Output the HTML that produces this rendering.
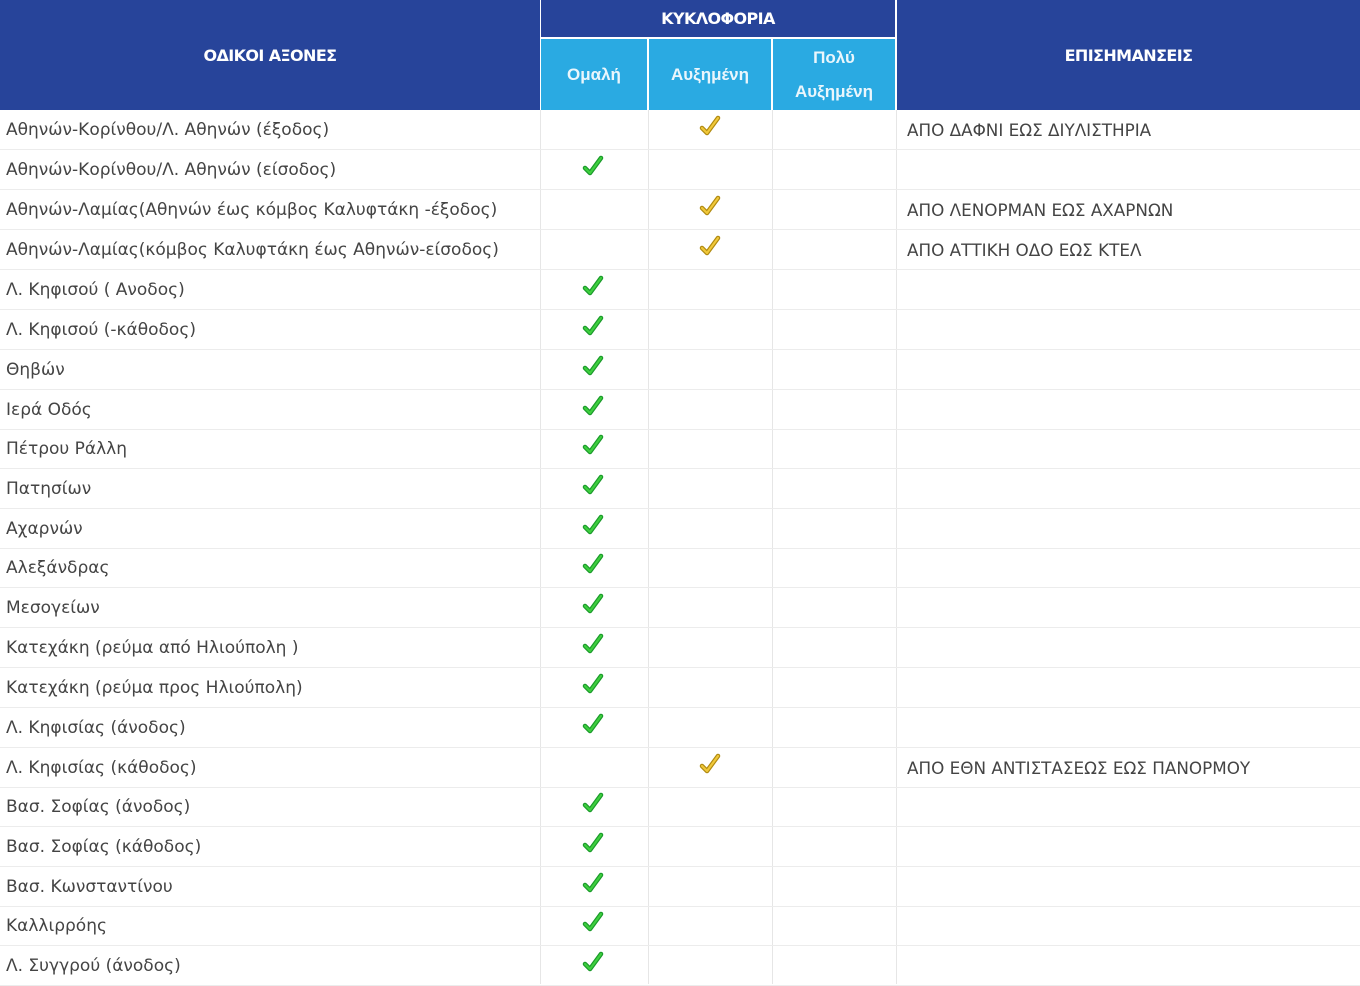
<!DOCTYPE html>
<html><head><meta charset="utf-8"><style>
*{margin:0;padding:0;box-sizing:border-box}
body{width:1360px;height:984px;overflow:hidden;background:#fff;font-family:"Liberation Sans","DejaVu Sans",sans-serif;position:relative}
.h{position:absolute;color:#fff;display:flex;align-items:center;justify-content:center;text-align:center}
.d{background:#27449a;font-weight:bold;font-size:16px;letter-spacing:-0.6px;font-family:"DejaVu Sans",sans-serif}
.l{background:#2aaae2;font-size:17px;font-weight:bold;line-height:34px;color:#eaf6fc}
.row{position:absolute;left:0;width:1360px;height:40px;border-bottom:1px solid #ececec}
.row span{position:absolute;top:0;line-height:40px;font-size:17px;color:#444;font-family:"DejaVu Sans",sans-serif}
.a{left:6px}.n{left:907px;font-size:16.8px!important}
.v{position:absolute;top:0;width:1px;height:874px;background:#e6e6e6}
.ck{position:absolute;top:8px;width:22px;height:22px}
</style></head><body>
<div class="h d" style="left:0;top:0;width:540px;height:110px">ΟΔΙΚΟΙ ΑΞΟΝΕΣ</div>
<div class="h d" style="left:541px;top:0;width:354px;height:37px">ΚΥΚΛΟΦΟΡΙΑ</div>
<div class="h d" style="left:897px;top:0;width:463px;height:110px">ΕΠΙΣΗΜΑΝΣΕΙΣ</div>
<div class="h l" style="left:541px;top:39px;width:106px;height:71px">Ομαλή</div>
<div class="h l" style="left:649px;top:39px;width:122px;height:71px">Αυξημένη</div>
<div class="h l" style="left:773px;top:39px;width:122px;height:71px">Πολύ<br>Αυξημένη</div>
<div style="position:absolute;left:0;top:110px;width:1360px;height:874px">
<div class="v" style="left:540px"></div><div class="v" style="left:648px"></div><div class="v" style="left:772px"></div><div class="v" style="left:896px"></div>
</div>
<svg width="0" height="0" style="position:absolute"><defs>
<symbol id="g" viewBox="0 0 22 22"><path d="M3 13 L8 18 L19 3" fill="none" stroke="#1a9a2a" stroke-width="4.5" stroke-linecap="round" stroke-linejoin="round"/><path d="M3 13 L8 18 L19 3" fill="none" stroke="#3ecf3e" stroke-width="2.2" stroke-linecap="round" stroke-linejoin="round"/></symbol>
<symbol id="y" viewBox="0 0 22 22"><path d="M3 13 L8 18 L19 3" fill="none" stroke="#b08a10" stroke-width="4.5" stroke-linecap="round" stroke-linejoin="round"/><path d="M3 13 L8 18 L19 3" fill="none" stroke="#f0c83a" stroke-width="2.2" stroke-linecap="round" stroke-linejoin="round"/></symbol>
</defs></svg>
<div class="row" style="top:110px"><span class="a">Αθηνών-Κορίνθου/Λ. Αθηνών (έξοδος)</span><svg class="ck" style="left:699px;top:5px"><use href="#y"/></svg><span class="n">ΑΠΟ ΔΑΦΝΙ ΕΩΣ ΔΙΥΛΙΣΤΗΡΙΑ</span></div>
<div class="row" style="top:150px"><span class="a">Αθηνών-Κορίνθου/Λ. Αθηνών (είσοδος)</span><svg class="ck" style="left:582px;top:5px"><use href="#g"/></svg></div>
<div class="row" style="top:190px"><span class="a">Αθηνών-Λαμίας(Αθηνών έως κόμβος Καλυφτάκη -έξοδος)</span><svg class="ck" style="left:699px;top:5px"><use href="#y"/></svg><span class="n">ΑΠΟ ΛΕΝΟΡΜΑΝ ΕΩΣ ΑΧΑΡΝΩΝ</span></div>
<div class="row" style="top:230px"><span class="a">Αθηνών-Λαμίας(κόμβος Καλυφτάκη έως Αθηνών-είσοδος)</span><svg class="ck" style="left:699px;top:5px"><use href="#y"/></svg><span class="n">ΑΠΟ ΑΤΤΙΚΗ ΟΔΟ ΕΩΣ ΚΤΕΛ</span></div>
<div class="row" style="top:270px"><span class="a">Λ. Κηφισού ( Ανοδος)</span><svg class="ck" style="left:582px;top:5px"><use href="#g"/></svg></div>
<div class="row" style="top:310px"><span class="a">Λ. Κηφισού (-κάθοδος)</span><svg class="ck" style="left:582px;top:5px"><use href="#g"/></svg></div>
<div class="row" style="top:350px"><span class="a">Θηβών</span><svg class="ck" style="left:582px;top:5px"><use href="#g"/></svg></div>
<div class="row" style="top:390px"><span class="a">Ιερά Οδός</span><svg class="ck" style="left:582px;top:5px"><use href="#g"/></svg></div>
<div class="row" style="top:429px"><span class="a">Πέτρου Ράλλη</span><svg class="ck" style="left:582px;top:5px"><use href="#g"/></svg></div>
<div class="row" style="top:469px"><span class="a">Πατησίων</span><svg class="ck" style="left:582px;top:5px"><use href="#g"/></svg></div>
<div class="row" style="top:509px"><span class="a">Αχαρνών</span><svg class="ck" style="left:582px;top:5px"><use href="#g"/></svg></div>
<div class="row" style="top:548px"><span class="a">Αλεξάνδρας</span><svg class="ck" style="left:582px;top:5px"><use href="#g"/></svg></div>
<div class="row" style="top:588px"><span class="a">Μεσογείων</span><svg class="ck" style="left:582px;top:5px"><use href="#g"/></svg></div>
<div class="row" style="top:628px"><span class="a">Κατεχάκη (ρεύμα από Ηλιούπολη )</span><svg class="ck" style="left:582px;top:5px"><use href="#g"/></svg></div>
<div class="row" style="top:668px"><span class="a">Κατεχάκη (ρεύμα προς Ηλιούπολη)</span><svg class="ck" style="left:582px;top:5px"><use href="#g"/></svg></div>
<div class="row" style="top:708px"><span class="a">Λ. Κηφισίας (άνοδος)</span><svg class="ck" style="left:582px;top:5px"><use href="#g"/></svg></div>
<div class="row" style="top:748px"><span class="a">Λ. Κηφισίας (κάθοδος)</span><svg class="ck" style="left:699px;top:5px"><use href="#y"/></svg><span class="n">ΑΠΟ ΕΘΝ ΑΝΤΙΣΤΑΣΕΩΣ ΕΩΣ ΠΑΝΟΡΜΟΥ</span></div>
<div class="row" style="top:787px"><span class="a">Βασ. Σοφίας (άνοδος)</span><svg class="ck" style="left:582px;top:5px"><use href="#g"/></svg></div>
<div class="row" style="top:827px"><span class="a">Βασ. Σοφίας (κάθοδος)</span><svg class="ck" style="left:582px;top:5px"><use href="#g"/></svg></div>
<div class="row" style="top:867px"><span class="a">Βασ. Κωνσταντίνου</span><svg class="ck" style="left:582px;top:5px"><use href="#g"/></svg></div>
<div class="row" style="top:906px"><span class="a">Καλλιρρόης</span><svg class="ck" style="left:582px;top:5px"><use href="#g"/></svg></div>
<div class="row" style="top:946px"><span class="a">Λ. Συγγρού (άνοδος)</span><svg class="ck" style="left:582px;top:5px"><use href="#g"/></svg></div>
</body></html>
